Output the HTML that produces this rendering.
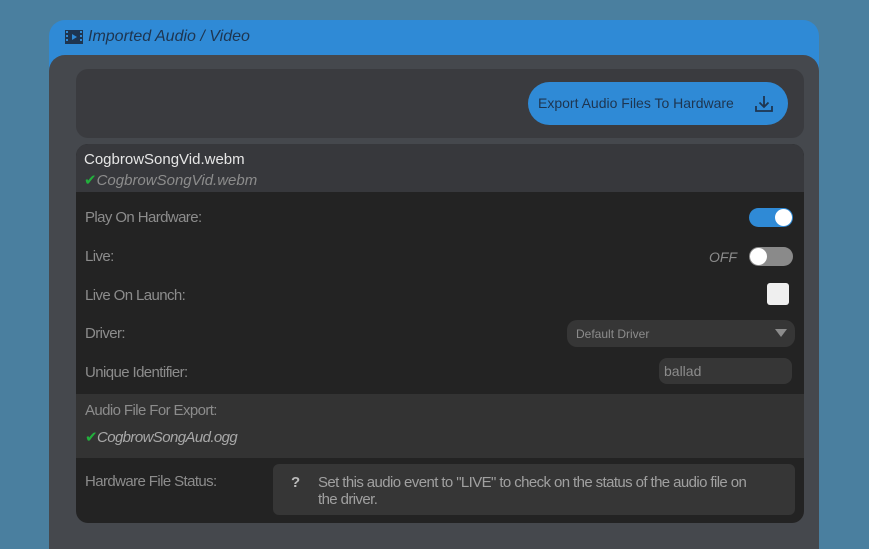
<!DOCTYPE html>
<html><head><meta charset="utf-8"><style>
*{box-sizing:border-box;margin:0;padding:0}
html,body{width:869px;height:549px;overflow:hidden}
body{background:#4a7f9f;font-family:"Liberation Sans",sans-serif;position:relative}
.card{position:absolute;left:49px;top:20px;width:770px;height:529px;background:#2f8ad6;border-radius:16px 16px 0 0;overflow:hidden}
.title{position:absolute;left:16px;top:8px;font-style:italic;font-size:16px;color:#1e3550;display:flex;align-items:center;gap:5px}
.body{position:absolute;left:0;top:35px;width:770px;height:520px;background:#45484d;border-radius:16px 16px 0 0}
.p{position:absolute}
.lbl{position:absolute;left:85px;font-size:15px;letter-spacing:-0.6px;color:#8c8c8c;white-space:nowrap}
</style></head><body>
<div class="card">
 <div class="title"><svg width="18" height="14" viewBox="0 0 18 14"><rect x="0" y="0" width="18" height="14" fill="#1e3550"/><rect x="1" y="1" width="2" height="2" fill="#2f8ad6"/><rect x="1" y="5" width="2" height="2" fill="#2f8ad6"/><rect x="1" y="9" width="2" height="2" fill="#2f8ad6"/><rect x="15" y="1" width="2" height="2" fill="#2f8ad6"/><rect x="15" y="5" width="2" height="2" fill="#2f8ad6"/><rect x="15" y="9" width="2" height="2" fill="#2f8ad6"/><path d="M7 4 L12 7 L7 10Z" fill="#2f8ad6"/></svg>Imported Audio / Video</div>
 <div class="body"></div>
</div>
<div class="p" style="left:76px;top:69px;width:728px;height:69px;background:#3a3b3f;border-radius:12px"></div>
<div class="p" style="left:528px;top:82px;width:260px;height:43px;background:#2f8ad6;border-radius:22px;color:#1e3550;font-size:14px;padding:13px 0 0 10px">Export Audio Files To Hardware
 <svg style="position:absolute;left:226px;top:13px" width="20" height="18" viewBox="0 0 20 18" fill="none" stroke="#1e3550" stroke-width="1.8"><path d="M10 1V12M5.5 7.5L10 12L14.5 7.5M2 11V16H18V11"/></svg></div>
<div class="p" style="left:76px;top:144px;width:728px;height:379px;background:#232323;border-radius:12px;overflow:hidden">
 <div class="p" style="left:0;top:0;width:728px;height:48px;background:#37383c;border-radius:12px 12px 0 0"></div>
 <div class="p" style="left:0;top:250px;width:728px;height:64px;background:#333333"></div>
 <div class="p" style="left:197px;top:320px;width:522px;height:51px;background:#363636;border-radius:6px"></div>
</div>
<div class="p" style="left:84px;top:151px;font-size:15px;color:#e6e6e6">CogbrowSongVid.webm</div>
<div class="p" style="left:84px;top:171px;font-size:15px;color:#8c8c8c;font-style:italic"><span style="color:#22b03c;font-style:normal">✔</span>CogbrowSongVid.webm</div>
<div class="lbl" style="top:209px">Play On Hardware:</div>
<div class="p" style="left:749px;top:208px;width:44px;height:19px;background:#2f8ad6;border-radius:10px"><div class="p" style="left:26px;top:1px;width:17px;height:17px;background:#fff;border-radius:50%"></div></div>
<div class="lbl" style="top:248px">Live:</div>
<div class="p" style="left:709px;top:249px;font-size:14px;font-style:italic;color:#8c8c8c">OFF</div>
<div class="p" style="left:749px;top:247px;width:44px;height:19px;background:#8a8a8a;border-radius:10px"><div class="p" style="left:1px;top:1px;width:17px;height:17px;background:#fff;border-radius:50%"></div></div>
<div class="lbl" style="top:287px">Live On Launch:</div>
<div class="p" style="left:767px;top:283px;width:22px;height:22px;background:#efefef;border-radius:3px"></div>
<div class="lbl" style="top:325px">Driver:</div>
<div class="p" style="left:567px;top:320px;width:228px;height:27px;background:#363636;border-radius:10px;font-size:12px;color:#8c8c8c;padding:7px 0 0 9px">Default Driver<div class="p" style="right:8px;top:9px;width:0;height:0;border-left:6px solid transparent;border-right:6px solid transparent;border-top:8px solid #8c8c8c"></div></div>
<div class="lbl" style="top:364px">Unique Identifier:</div>
<div class="p" style="left:659px;top:358px;width:133px;height:26px;background:#363636;border-radius:8px;font-size:14px;color:#8c8c8c;padding:5px 0 0 5px">ballad</div>
<div class="lbl" style="top:402px">Audio File For Export:</div>
<div class="lbl" style="top:428px;font-style:italic;color:#a8a8a8"><span style="color:#22b03c;font-style:normal">✔</span>CogbrowSongAud.ogg</div>
<div class="lbl" style="top:473px">Hardware File Status:</div>
<div class="lbl" style="left:291px;top:474px;color:#bbb;font-weight:bold">?</div>
<div class="lbl" style="left:318px;top:474px;line-height:17px;color:#a0a0a0">Set this audio event to "LIVE" to check on the status of the audio file on<br>the driver.</div>
</body></html>
